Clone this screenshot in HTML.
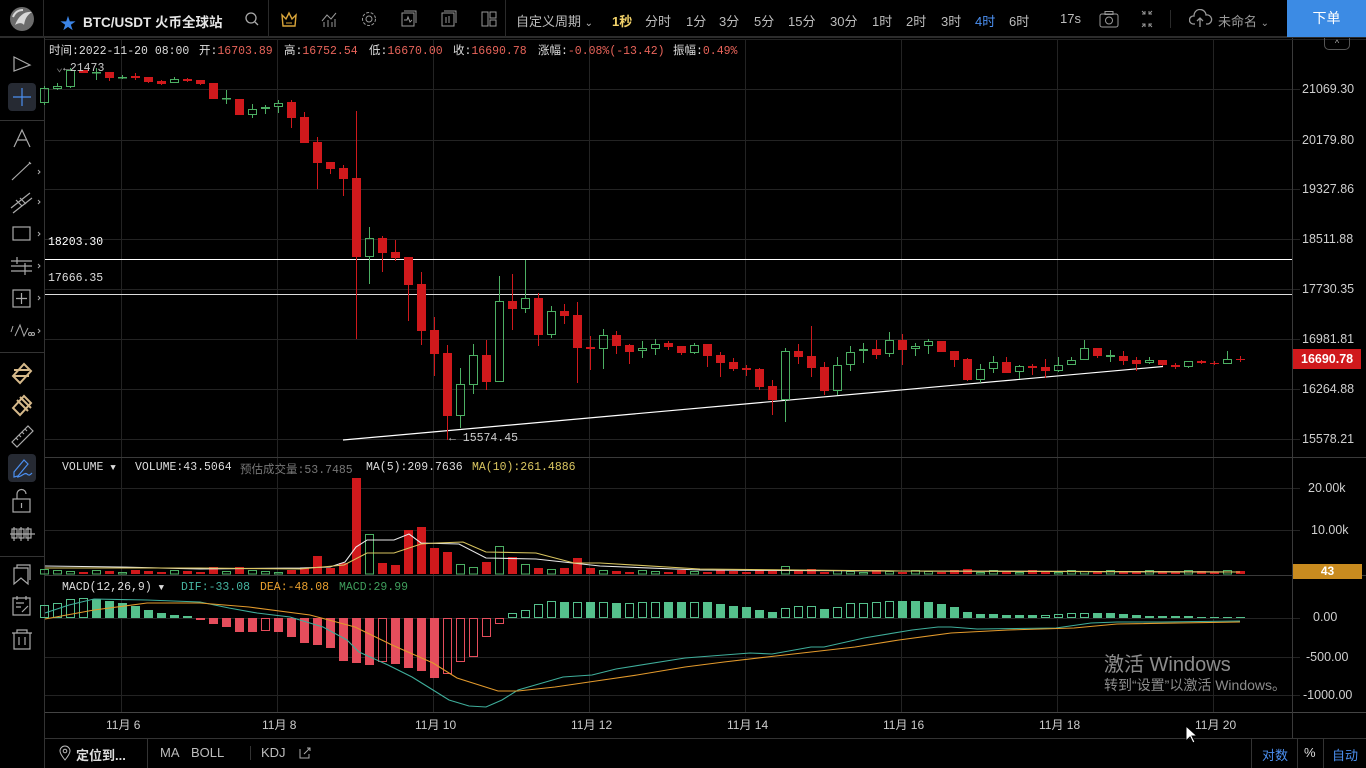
<!DOCTYPE html>
<html><head><meta charset="utf-8">
<style>
*{margin:0;padding:0;box-sizing:border-box}
body{width:1366px;height:768px;background:#000;overflow:hidden;position:relative;font-family:"Liberation Sans","Noto Sans CJK SC",sans-serif;color:#bdbdbd;font-size:13px}
.a{position:absolute;white-space:nowrap}
.mono{font-family:"Liberation Mono","Noto Sans CJK SC",monospace;font-size:11.5px}
.top{position:absolute;left:0;top:0;width:1366px;height:38px;border-bottom:2px solid #2c2c2c;background:#000}
.vl{position:absolute;width:1px;background:#2a2a2a}
.hl{position:absolute;height:1px;background:#2a2a2a}
.ax{position:absolute;left:1302px;font-size:12.5px;color:#cfcfcf}
</style></head><body>

<div class="top"></div>
<!-- logo -->
<svg class="a" style="left:5px;top:3px" width="34" height="32" viewBox="0 0 34 32">
<circle cx="17" cy="16" r="12" fill="#6b6b6b"/>
<path d="M10 22 C14 12 20 8 27 9 C22 12 20 16 19 22 C17 19 13 20 10 22Z" fill="#d8d8d8"/>
<path d="M8 14 C10 9 14 7 18 7" stroke="#d8d8d8" stroke-width="2" fill="none"/>
</svg>
<div class="vl" style="left:43px;top:0;height:38px"></div>
<div class="a" style="left:60px;top:10px;color:#3b84e6;font-size:16px">★</div>
<div class="a" style="left:83px;top:11px;color:#e6e6e6;font-weight:bold;font-size:13.5px">BTC/USDT 火币全球站</div>
<svg class="a" style="left:244px;top:11px" width="16" height="16"><circle cx="7" cy="7" r="5" stroke="#aaa" fill="none" stroke-width="1.3"/><line x1="11" y1="11" x2="14" y2="14" stroke="#aaa" stroke-width="1.3"/></svg>
<div class="vl" style="left:268px;top:0;height:38px"></div>
<svg class="a" style="left:280px;top:10px" width="18" height="18"><path d="M2 5 L6 9 L9 3 L12 9 L16 5 L15 16 H3 Z" fill="none" stroke="#d9a53a" stroke-width="1.4"/><line x1="6" y1="13" x2="12" y2="13" stroke="#d9a53a"/></svg>
<svg class="a" style="left:320px;top:10px" width="18" height="18"><path d="M2 11 L7 5 L11 9 L16 3" stroke="#999" fill="none"/><line x1="4" y1="12" x2="4" y2="17" stroke="#999"/><line x1="8" y1="10" x2="8" y2="17" stroke="#999"/><line x1="12" y1="12" x2="12" y2="17" stroke="#999"/><line x1="15" y1="9" x2="15" y2="17" stroke="#999"/></svg>
<svg class="a" style="left:360px;top:10px" width="18" height="18"><circle cx="9" cy="9" r="3" stroke="#999" fill="none"/><circle cx="9" cy="9" r="6.5" stroke="#999" fill="none" stroke-dasharray="3 1.6"/></svg>
<svg class="a" style="left:400px;top:10px" width="18" height="18"><rect x="2" y="3" width="12" height="13" stroke="#999" fill="none"/><path d="M4 1 H16 V13" stroke="#999" fill="none"/><path d="M4 10 L7 10 L8 7 L10 12 L12 10" stroke="#999" fill="none"/></svg>
<svg class="a" style="left:440px;top:10px" width="18" height="18"><rect x="2" y="3" width="12" height="13" stroke="#999" fill="none"/><path d="M4 1 H16 V13" stroke="#999" fill="none"/><line x1="6" y1="7" x2="6" y2="13" stroke="#999"/><line x1="9" y1="6" x2="9" y2="13" stroke="#999"/></svg>
<svg class="a" style="left:480px;top:10px" width="18" height="18"><rect x="2" y="2" width="6" height="14" stroke="#999" fill="none"/><rect x="10" y="2" width="6" height="6" stroke="#999" fill="none"/><rect x="10" y="10" width="6" height="6" stroke="#999" fill="none"/></svg>
<div class="vl" style="left:505px;top:0;height:38px"></div>
<div class="a" style="left:516px;top:11px">自定义周期 <span style="font-size:10px">⌄</span></div>
<div class="a" style="left:612px;top:11px;color:#f3d36a;font-weight:bold">1秒</div>
<div class="a" style="left:645px;top:11px">分时</div>
<div class="a" style="left:686px;top:11px">1分</div>
<div class="a" style="left:719px;top:11px">3分</div>
<div class="a" style="left:754px;top:11px">5分</div>
<div class="a" style="left:788px;top:11px">15分</div>
<div class="a" style="left:830px;top:11px">30分</div>
<div class="a" style="left:872px;top:11px">1时</div>
<div class="a" style="left:906px;top:11px">2时</div>
<div class="a" style="left:941px;top:11px">3时</div>
<div class="a" style="left:975px;top:11px;color:#4b8ff0">4时</div>
<div class="a" style="left:1009px;top:11px">6时</div>
<div class="a" style="left:1060px;top:11px">17s</div>
<svg class="a" style="left:1098px;top:10px" width="22" height="18"><rect x="2" y="4" width="18" height="13" rx="2" stroke="#999" fill="none"/><rect x="7" y="1.5" width="8" height="3" stroke="#999" fill="none"/><circle cx="11" cy="10.5" r="3.5" stroke="#999" fill="none"/></svg>
<svg class="a" style="left:1138px;top:10px" width="18" height="18"><path d="M4 1 L7 4 M7 1 V4 H4 M14 1 L11 4 M11 1 V4 H14 M4 17 L7 14 M7 17 V14 H4 M14 17 L11 14 M11 17 V14 H14" stroke="#999" fill="none"/></svg>
<div class="vl" style="left:1170px;top:10px;height:18px"></div>
<svg class="a" style="left:1189px;top:9px" width="24" height="20"><path d="M6 15 H4 A4 4 0 0 1 5 7 A6 6 0 0 1 17 6 A4.5 4.5 0 0 1 19 15 H17" stroke="#999" fill="none" stroke-width="1.3"/><path d="M11 18 V9 M8 12 L11 9 L14 12" stroke="#999" fill="none" stroke-width="1.3"/></svg>
<div class="a" style="left:1218px;top:11px;color:#9a9a9a">未命名 <span style="font-size:10px">⌄</span></div>
<div class="a" style="left:1287px;top:0;width:79px;height:37px;background:#3c8be4;color:#fff;font-size:14px;text-align:center;line-height:37px">下单</div>

<!-- left sidebar -->
<div class="vl" style="left:44px;top:38px;height:730px;background:#333"></div>
<div class="hl" style="left:0;top:120px;width:44px;background:#333"></div>
<div class="hl" style="left:0;top:352px;width:44px;background:#333"></div>
<div class="hl" style="left:0;top:556px;width:44px;background:#333"></div>
<div class="a" style="left:8px;top:83px;width:28px;height:28px;background:#262a33;border-radius:4px"></div>
<div class="a" style="left:8px;top:454px;width:28px;height:28px;background:#262a33;border-radius:4px"></div>
<svg class="a" style="left:0;top:40px" width="44" height="620" stroke="#aaa" fill="none" stroke-width="1.2">
<path d="M14 17 L30 25 L14 31 Z"/>
<path d="M22 48 V66 M13 57 H31" stroke="#4b8ff0"/>
<path d="M14 107 L22 90 L30 107 M17 100 H27"/>
<path d="M13 139 L30 123 M12 140 L14 138 M29 122 L31 124"/><path d="M38 130 l2 2 l-2 2" stroke-width="1"/>
<path d="M11 168 L30 153 M13 173 L32 158 M16 160 L22 166 M20 158 L26 164"/><path d="M38 160 l2 2 l-2 2" stroke-width="1"/>
<rect x="13" y="187" width="17" height="13"/><path d="M38 192 l2 2 l-2 2" stroke-width="1"/>
<path d="M11 221 H32 M11 226 H32 M11 231 H32 M17 217 V224 M25 223 V235"/><path d="M38 224 l2 2 l-2 2" stroke-width="1"/>
<rect x="13" y="250" width="17" height="17"/><path d="M21.5 253 V264 M16 258.5 H27"/><path d="M38 256 l2 2 l-2 2" stroke-width="1"/>
<path d="M11 292 L13 286 M15 296 L20 285 L24 296 L28 288" stroke-width="1"/><circle cx="30" cy="294" r="1.5" stroke-width="1"/><circle cx="33" cy="294" r="1.5" stroke-width="1"/><path d="M38 289 l2 2 l-2 2" stroke-width="1"/>
<g stroke="#d6b98a" stroke-width="2"><path d="M13 336 L24 324 L31 331 L20 343 Z"/><path d="M14 330 L29 330 M14 336 L29 336"/></g>
<g stroke="#d6b98a" stroke-width="2"><path d="M13 368 L24 356 L31 363 L20 375 Z"/><path d="M17 360 L28 371 M20 357 L31 368"/></g>
<path d="M12 402 L28 386 L33 391 L17 407 Z M16 398 l2 2 M19 395 l2 2 M22 392 l2 2 M25 389 l2 2"/>
<path d="M14 437 L14 432 L24 420 L28 424 L18 436 Z M17 437 C22 437 24 432 27 434 C29 436 30 435 32 433" stroke="#4b8ff0"/>
<rect x="13" y="459" width="17" height="13"/><path d="M17 459 V454 A4.5 4.5 0 0 1 26 454" /><path d="M21.5 463 V468"/>
<path d="M10 494 H35 M14 487 V501 M21 487 V501 M28 487 V501"/><rect x="12" y="489" width="5" height="9"/><rect x="19" y="489" width="5" height="9"/><rect x="26" y="489" width="5" height="9"/>
<path d="M14 528 V544 L21 538 L28 544 V528 Z M17 528 V525 H30 V540"/>
<path d="M13 558 H30 V575 H13 Z M16 563 H24 M16 567 H21 M22 572 L28 566" /><path d="M17 556 V560 M26 556 V560"/>
<path d="M12 593 H32 M17 593 V590 H27 V593 M14 593 V609 H30 V593 M19 597 V605 M25 597 V605"/>
</svg>

<!-- chart svg -->
<svg id="ch" class="a" style="left:0;top:0" width="1366" height="768"></svg>

<!-- info row -->
<div class="a mono" style="left:49px;top:42px;color:#ddd">时间:2022-11-20 08:00</div>
<div class="a mono" style="left:199px;top:42px;color:#ddd">开:<span style="color:#e8645a">16703.89</span></div>
<div class="a mono" style="left:284px;top:42px;color:#ddd">高:<span style="color:#e8645a">16752.54</span></div>
<div class="a mono" style="left:369px;top:42px;color:#ddd">低:<span style="color:#e8645a">16670.00</span></div>
<div class="a mono" style="left:453px;top:42px;color:#ddd">收:<span style="color:#e8645a">16690.78</span></div>
<div class="a mono" style="left:538px;top:42px;color:#ddd">涨幅:<span style="color:#e8645a">-0.08%(-13.42)</span></div>
<div class="a mono" style="left:673px;top:42px;color:#ddd">振幅:<span style="color:#e8645a">0.49%</span></div>
<div class="a" style="left:1324px;top:38px;width:26px;height:12px;border:1px solid #555;border-top:none;border-radius:0 0 5px 5px;color:#aaa;font-size:9px;text-align:center;line-height:10px">^</div>

<div class="a mono" style="left:56px;top:60px;color:#ccc"><span style="color:#777">⌄</span>←21473</div>
<div class="a mono" style="left:48px;top:236px;color:#fff">18203.30</div>
<div class="a mono" style="left:48px;top:272px;color:#ddd">17666.35</div>
<div class="a mono" style="left:449px;top:432px;color:#ccc">← 15574.45</div>

<!-- volume legend -->
<div class="a mono" style="left:62px;top:461px;color:#ddd">VOLUME <span style="font-size:9px">▼</span></div>
<div class="a mono" style="left:135px;top:461px;color:#ddd">VOLUME:43.5064</div>
<div class="a mono" style="left:240px;top:461px;color:#777">预估成交量:53.7485</div>
<div class="a mono" style="left:366px;top:461px;color:#ddd">MA(5):209.7636</div>
<div class="a mono" style="left:472px;top:461px;color:#d9c560">MA(10):261.4886</div>
<!-- macd legend -->
<div class="a mono" style="left:62px;top:581px;color:#ddd">MACD(12,26,9) <span style="font-size:9px">▼</span></div>
<div class="a mono" style="left:181px;top:581px;color:#45b3a0">DIF:-33.08</div>
<div class="a mono" style="left:260px;top:581px;color:#e89f2e">DEA:-48.08</div>
<div class="a mono" style="left:339px;top:581px;color:#3f9d5c">MACD:29.99</div>

<!-- right axis -->
<div class="ax" style="top:82px">21069.30</div>
<div class="ax" style="top:133px">20179.80</div>
<div class="ax" style="top:182px">19327.86</div>
<div class="ax" style="top:232px">18511.88</div>
<div class="ax" style="top:282px">17730.35</div>
<div class="ax" style="top:332px">16981.81</div>
<div class="a" style="left:1293px;top:349px;width:68px;height:20px;background:#d0191c;color:#fff;font-size:12.5px;font-weight:bold;line-height:20px;padding-left:8px">16690.78</div>
<div class="ax" style="top:382px">16264.88</div>
<div class="ax" style="top:432px">15578.21</div>
<div class="ax" style="top:481px;left:1308px">20.00k</div>
<div class="ax" style="top:523px;left:1311px">10.00k</div>
<div class="a" style="left:1293px;top:564px;width:69px;height:15px;background:#c98b1f;color:#fff;font-size:12px;font-weight:bold;text-align:center;line-height:15px">43</div>
<div class="ax" style="top:610px;left:1313px">0.00</div>
<div class="ax" style="top:650px;left:1306px">-500.00</div>
<div class="ax" style="top:688px;left:1303px">-1000.00</div>

<!-- time axis -->
<div class="a" style="left:106px;top:716px;font-size:12px;color:#ccc">11月 6</div>
<div class="a" style="left:262px;top:716px;font-size:12px;color:#ccc">11月 8</div>
<div class="a" style="left:415px;top:716px;font-size:12px;color:#ccc">11月 10</div>
<div class="a" style="left:571px;top:716px;font-size:12px;color:#ccc">11月 12</div>
<div class="a" style="left:727px;top:716px;font-size:12px;color:#ccc">11月 14</div>
<div class="a" style="left:883px;top:716px;font-size:12px;color:#ccc">11月 16</div>
<div class="a" style="left:1039px;top:716px;font-size:12px;color:#ccc">11月 18</div>
<div class="a" style="left:1195px;top:716px;font-size:12px;color:#ccc">11月 20</div>

<!-- bottom bar -->
<svg class="a" style="left:58px;top:745px" width="14" height="16"><path d="M7 15 C3 10 2 8 2 6 A5 5 0 0 1 12 6 C12 8 11 10 7 15Z" stroke="#bbb" fill="none"/><circle cx="7" cy="6" r="1.8" stroke="#bbb" fill="none"/></svg>
<div class="a" style="left:76px;top:745px;color:#ddd;font-weight:bold">定位到...</div>
<div class="vl" style="left:147px;top:739px;height:29px;background:#333"></div>
<div class="a" style="left:160px;top:745px">MA</div>
<div class="a" style="left:191px;top:745px">BOLL</div>
<div class="vl" style="left:250px;top:746px;height:14px;background:#333"></div>
<div class="a" style="left:261px;top:745px">KDJ</div>
<svg class="a" style="left:298px;top:746px" width="14" height="14"><path d="M2 3 V12 H11 V8 M6 8 L12 2 M9 2 H12 V5" stroke="#aaa" fill="none"/></svg>
<div class="vl" style="left:1251px;top:739px;height:29px;background:#333"></div>
<div class="a" style="left:1262px;top:745px;color:#4b8ff0">对数</div>
<div class="vl" style="left:1297px;top:739px;height:29px;background:#333"></div>
<div class="a" style="left:1304px;top:745px;color:#ddd">%</div>
<div class="vl" style="left:1323px;top:739px;height:29px;background:#333"></div>
<div class="a" style="left:1332px;top:745px;color:#4b8ff0">自动</div>

<!-- watermark -->
<div class="a" style="left:1104px;top:648px;font-size:20px;color:#8c8c8c">激活 Windows</div>
<div class="a" style="left:1104px;top:675px;font-size:14px;color:#8c8c8c">转到“设置”以激活 Windows。</div>
<svg class="a" style="left:1185px;top:725px" width="14" height="20"><path d="M1 1 V16 L5 12 L8 18 L10 17 L7 11 L12 11 Z" fill="#fff" stroke="#000"/></svg>

<script>
var s=document.getElementById('ch'),h='';
function L(x1,y1,x2,y2,c,w){h+='<line x1="'+x1+'" y1="'+y1+'" x2="'+x2+'" y2="'+y2+'" stroke="'+c+'" stroke-width="'+(w||1)+'"/>';}
function R(x,y,w,hh,f,st){h+='<rect x="'+x+'" y="'+y+'" width="'+w+'" height="'+hh+'" fill="'+f+'"'+(st?' stroke="'+st+'"':'')+'/>';}
var G='#232323';
// grid
[121,277,433,589,745,901,1057,1213].forEach(function(x){L(x+.5,40,x+.5,712,G);});
[89,140,189,239,289,339,389,439].forEach(function(y){L(45,y+.5,1300,y+.5,G);});
[488,530,618,657,695].forEach(function(y){L(45,y+.5,1300,y+.5,G);});
L(45,457.5,1366,457.5,'#3a3a3a');L(45,575.5,1366,575.5,'#3a3a3a');
L(45,712.5,1366,712.5,'#444');L(45,738.5,1366,738.5,'#333');
L(1292.5,38,1292.5,738,'#3a3a3a');
L(45,39.5,1366,39.5,'#222');
// h lines
L(45,259.5,1292,259.5,'#fff');L(45,294.5,1292,294.5,'#ddd');
L(343,440,1163,366.5,'#fff',1.2);
var C=[[-1,'g',88,103,86,105],[0,'g',86,89,83,90],[1,'g',70,87,68,88],[2,'r',70,73,70,73],[3,'g',72,73,68,80],[4,'r',72,78,72,81],[5,'g',77,78,75,79],[6,'r',76,78,73,80],[7,'r',77,82,77,83],[8,'r',81,84,80,85],[9,'g',79,83,77,83],[10,'r',79,81,78,82],[11,'r',80,84,80,85],[12,'r',83,99,83,99],[13,'g',98,99,90,104],[14,'r',99,115,99,115],[15,'g',109,115,104,118],[16,'g',107,109,105,114],[17,'g',103,107,100,113],[18,'r',102,118,100,128],[19,'r',117,143,112,143],[20,'r',142,163,137,189],[21,'r',162,169,162,174],[22,'r',168,179,165,196],[23,'r',178,257,111,339],[24,'g',238,257,227,284],[25,'r',238,253,236,272],[26,'r',252,258,240,261],[27,'r',257,285,257,321],[28,'r',284,331,272,345],[29,'r',330,354,317,376],[30,'r',353,416,345,440],[31,'g',384,416,368,428],[32,'g',355,385,344,394],[33,'r',355,382,340,390],[34,'g',301,382,276,382],[35,'r',301,309,274,330],[36,'g',298,309,260,313],[37,'r',298,335,293,346],[38,'g',311,335,306,338],[39,'r',311,316,304,324],[40,'r',315,348,302,383],[41,'r',347,349,336,370],[42,'g',335,349,329,369],[43,'r',335,346,331,354],[44,'r',345,352,344,364],[45,'g',348,351,341,358],[46,'g',344,349,339,355],[47,'r',343,347,341,350],[48,'r',346,353,346,355],[49,'g',345,353,343,354],[50,'r',344,356,344,367],[51,'r',355,363,352,377],[52,'r',362,369,358,371],[53,'r',368,370,365,376],[54,'r',369,387,368,390],[55,'r',386,400,380,415],[56,'g',351,400,348,422],[57,'r',351,357,344,364],[58,'r',356,368,326,377],[59,'r',367,391,362,395],[60,'g',365,391,357,395],[61,'g',352,365,346,371],[62,'g',349,351,343,363],[63,'r',349,355,340,359],[64,'g',340,354,332,357],[65,'r',340,350,334,365],[66,'g',346,349,343,356],[67,'g',341,346,339,354],[68,'r',341,352,341,352],[69,'r',351,360,351,367],[70,'r',359,380,358,381],[71,'g',369,380,364,383],[72,'g',362,369,356,373],[73,'r',362,373,357,373],[74,'g',366,372,365,379],[75,'r',366,368,364,375],[76,'r',367,371,359,378],[77,'g',365,371,357,372],[78,'g',360,365,357,365],[79,'g',348,360,340,360],[80,'r',348,356,348,358],[81,'g',355,357,350,362],[82,'r',356,361,351,365],[83,'r',360,364,357,371],[84,'g',360,363,357,364],[85,'r',360,365,360,366],[86,'r',365,367,363,369],[87,'g',361,367,361,368],[88,'r',361,363,360,364],[89,'r',363,364,361,365],[90,'g',359,364,351,364],[91,'r',359,360,356,362]];
var RED='#d0191c',GR='#4caf63';
function X(k){return 57+13*k;}
C.forEach(function(c){var x=X(c[0]);var col=c[1]=='r'?RED:GR;
 L(x+.5,c[4],x+.5,c[2],col);L(x+.5,c[3],x+.5,c[5],col);
 var hh=Math.max(c[3]-c[2],1);
 if(c[1]=='r')R(x-4,c[2],9,hh,RED);else R(x-3.5,c[2]+.5,8,Math.max(hh-1,0.5),'none',GR);
});
// volume
var V={19:568,20:556,21:568,22:563,23:478,24:534,25:563,26:565,27:530,28:527,29:548,30:552,31:564,32:567,33:562,34:546,35:557,36:564,37:568,38:569,39:568,40:558,41:568,56:566,12:567,14:567,58:569,70:569};
C.forEach(function(c){var k=c[0],x=X(k);var t=V[k]||(570+((k*7)%3));
 if(c[1]=='r')R(x-4,t,9,574-t,RED);else R(x-3.5,t+.5,8,573.5-t,'none',GR);});
function P(pts,col){h+='<polyline points="'+pts+'" fill="none" stroke="'+col+'" stroke-width="1.1"/>';}
P('45,566 120,567 200,569 300,568 330,567 345,562 356,547 367,540 394,540 409,534 421,543 459,544 486,558 536,559 600,566 700,570 900,571 1240,572','#e8e8e8');
P('45,568 200,568 300,569 344,565 367,553 394,553 421,544 436,543 463,542 486,552 536,553 574,563 600,563 700,569 900,571 1240,572','#d9c560');
// macd bars: k,y,solid
var M=[[-1,605,0],[0,603,0],[1,599,0],[2,598,0],[3,599,1],[4,601,1],[5,603,1],[6,606,1],[7,610,1],[8,613,1],[9,615,1],[10,616,1],[11,620,1],[12,624,1],[13,627,1],[14,632,1],[15,632,1],[16,631,0],[17,632,1],[18,637,1],[19,643,1],[20,645,1],[21,648,1],[22,661,1],[23,663,1],[24,665,1],[25,662,0],[26,664,1],[27,668,1],[28,671,1],[29,678,1],[30,674,0],[31,662,0],[32,657,0],[33,637,0],[34,624,0],[35,613,0],[36,610,0],[37,604,0],[38,601,0],[39,602,1],[40,602,0],[41,602,1],[42,602,0],[43,603,1],[44,603,0],[45,602,0],[46,602,0],[47,602,1],[48,602,1],[49,602,0],[50,602,1],[51,604,1],[52,606,1],[53,607,1],[54,610,1],[55,612,1],[56,608,0],[57,606,0],[58,606,0],[59,609,1],[60,607,0],[61,603,0],[62,603,0],[63,602,0],[64,601,0],[65,601,1],[66,601,1],[67,602,1],[68,604,1],[69,607,1],[70,612,1],[71,614,1],[72,614,1],[73,615,1],[74,615,1],[75,615,1],[76,615,0],[77,614,0],[78,613,0],[79,613,0],[80,613,1],[81,613,1],[82,614,1],[83,615,1],[84,616,1],[85,616,1],[86,616,1],[87,616,1],[88,617,1],[89,617,1],[90,617,1],[91,617,1]];
var MG='#55c08c',MR='#e54d5c';
M.forEach(function(m){var x=X(m[0]),y=m[1];
 if(y<618){ if(m[2])R(x-4,y,9,618-y,MG);else R(x-3.5,y+.5,8,617-y,'none',MG);}
 else { if(m[2])R(x-4,618,9,y-618,MR);else R(x-3.5,618.5,8,y-619,'none',MR);}
});
P('45,613 69,605 94,599 147,600 200,602 229,608 257,613 290,617 323,627 347,640 359,652 388,665 412,677 433,690 449,700 469,706 486,707 502,700 518,690 563,677 592,675 616,669 685,658 724,655 750,653 772,654 811,647 824,647 864,638 912,630 938,627 951,627 977,629 1056,628 1091,623 1117,622 1161,622 1240,621','#3fae9b');
P('45,619 94,610 147,603 200,603 249,607 310,615 355,627 392,645 433,663 457,678 498,691 518,691 555,687 596,681 637,675 685,667 724,662 767,657 811,652 855,647 899,640 951,633 1008,630 1074,628 1117,624 1240,622','#e39a2c');
s.innerHTML=h;
</script>
</body></html>
